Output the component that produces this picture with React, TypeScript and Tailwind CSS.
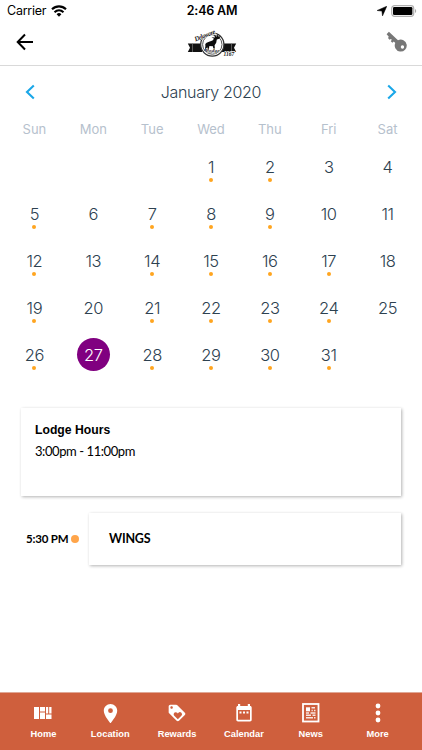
import { useState } from "react";
import { MdLocationOn, MdLoyalty } from "react-icons/md";

const weekDays = ["Sun", "Mon", "Tue", "Wed", "Thu", "Fri", "Sat"];
const eventDays = [1, 2, 5, 7, 8, 9, 12, 14, 15, 16, 17, 19, 21, 22, 23, 24, 26, 28, 29, 30, 31];

// January 2020 starts on a Wednesday
const days: Array<number | null> = [
  null, null, null,
  ...Array.from({ length: 31 }, (_, i) => i + 1),
  null,
];

function StatusBar() {
  return (
    <div className="flex h-[22px] items-center font-['Inter',sans-serif] text-black">
      <div className="flex flex-1 items-center gap-[5px] pl-[7px]">
        <span className="text-[12.5px] leading-none tracking-[-0.25px]">Carrier</span>
        <svg width="16" height="12" viewBox="0 0 16 12" fill="none" stroke="#000" strokeWidth="2.1">
          <path d="M1 4.3C5 .4 11 .4 15 4.3" />
          <path d="M3.500 7.200C6.200 4.700 9.800 4.700 12.500 7.200" />
          <path d="M5.600 9.200a3.400 3.400 0 0 1 4.800 0L8 11.700z" fill="#000" stroke="none" />
        </svg>
      </div>
      <span className="text-[12.5px] font-semibold leading-none tracking-[-0.2px]">2:46 AM</span>
      <div className="flex flex-1 items-center justify-end gap-[4px] pr-[5px]">
        <svg width="10" height="10" viewBox="0 0 10 10">
          <path d="M9.800 .2 5.500 9.900 4.900 5.100 .1 4.500z" fill="#000" stroke="#000" strokeWidth=".5" />
        </svg>
        <svg width="26" height="12" viewBox="0 0 26 12">
          <rect x=".7" y=".7" width="22" height="10.600" rx="2.800" fill="#fff" stroke="#b0b0b0" strokeWidth="1.200" />
          <rect x="2" y="2" width="19.400" height="8" rx="1.300" fill="#000" />
          <path d="M24 4v4c1.600-.5 1.600-3.500 0-4z" fill="#aaa" />
        </svg>
      </div>
    </div>
  );
}

function LodgeLogo() {
  return (
    <svg width="50" height="32" viewBox="0 0 50 32" className="mr-px overflow-visible">
      <path d="M.8 15.500H15v8.500H.8l2.200-4.200zM35 15.500h14.200L47 19.800l2.200 4.200H35z" fill="#111" />
      <path d="M5.500 15.500v8.500M44.500 15.500v8.500" stroke="#777" strokeWidth=".7" />
      <circle cx="25.300" cy="16.500" r="11.600" fill="#fff" stroke="#333" strokeWidth="1.200" />
      <circle cx="25.300" cy="16.500" r="9.700" fill="none" stroke="#555" strokeWidth="1" />
      <path
        d="M18.300 16c1.500-2.200 4.500-2.200 7.200-3.500l1.500-1.800-2.500-1.400 3.600.1-1.300-2.700 2.900 2 1.300-3.200.4 3.200 2.300-.8-1.500 2.800-2.400.8-.6 3.200-1.600 2.500.5 6.300h-1.200l-1-5.300-3.500-.1-1 5.200h-1.200l.1-4.800-1.500 4.300h-1.200l.8-4.600z"
        fill="#0c0c0c"
      />
      <path d="M17.500 22.200h15.600l-2 2.300H19.500z" fill="#222" />
      <g fontFamily="'Liberation Serif', serif" fontStyle="italic" fontWeight="bold" fill="#111">
        <text x="8.500" y="13.500" fontSize="6.800" textLength="22" transform="rotate(-22 8.500 13.500)" stroke="#fff" strokeWidth=".7" paintOrder="stroke">Delaware</text>
        <text x="36.500" y="27.500" fontSize="5.500" stroke="#fff" strokeWidth="1.400" paintOrder="stroke">1167</text>
        <text x="18.500" y="24" fontSize="5" textLength="14" stroke="#fff" strokeWidth=".8" paintOrder="stroke">Lodge</text>
      </g>
    </svg>
  );
}

function Header() {
  return (
    <header className="flex h-[44px] items-center border-b border-[#d9d9d9]">
      <button className="flex flex-1 pb-[3px] pl-[16px]" aria-label="Back">
        <svg width="18" height="18" viewBox="0 0 18 18" fill="none" stroke="#000" strokeWidth="2">
          <path d="M17 9H2M9 1.500 1.700 9 9 16.500" />
        </svg>
      </button>
      <LodgeLogo />
      <button className="flex flex-1 justify-end pr-[14px] pb-[4px]" aria-label="Sign in">
        <svg width="22" height="22" viewBox="0 0 22 22">
          <path
            fillRule="evenodd"
            d="M2.900 .8 12 9.200a6 6 0 1 1-2.700 2.800L7.800 10.500 6.400 11.800 4.800 10.200 5.800 8.800 4.900 7.900 3.500 8.700 2 7.100 2.800 5.700.6 3.200zM16.400 14.300a1.700 1.700 0 1 0 .1 3.400 1.700 1.700 0 0 0-.1-3.400z"
            fill="#777"
          />
        </svg>
      </button>
    </header>
  );
}

function Calendar() {
  const [selected, setSelected] = useState(27);

  return (
    <section className="px-[5px] font-['Inter',sans-serif] font-light">
      <div className="flex h-[51px] items-center justify-between px-[20px] text-[#2d4150]">
        <button aria-label="Previous month">
          <svg width="11" height="16" viewBox="0 0 11 16" fill="none" stroke="#1aa7e8" strokeWidth="2.100">
            <path d="M8.800 1.500 2 8l6.800 6.500" />
          </svg>
        </button>
        <span className="text-[16px] leading-none tracking-[-0.33px]">January 2020</span>
        <button aria-label="Next month">
          <svg width="11" height="16" viewBox="0 0 11 16" fill="none" stroke="#1aa7e8" strokeWidth="2.100">
            <path d="M2.200 1.500 9 8l-6.800 6.500" />
          </svg>
        </button>
      </div>
      <div className="grid h-[25px] grid-cols-7 items-center text-center text-[13px] font-normal leading-none text-[#b6c1cd]">
        {weekDays.map(day => (
          <span key={day}>{day}</span>
        ))}
      </div>
      <div className="grid grid-cols-7 pt-[8px]">
        {days.map((day, i) => (
          <div key={i} className="flex h-[47px] flex-col items-center">
            {day && (
              <button
                onClick={() => setSelected(day)}
                className={
                  day === selected
                    ? "flex h-[33px] w-[33px] items-center justify-center rounded-full bg-[#800080] pt-px text-[16.5px] leading-none tracking-[-0.4px] text-white"
                    : "flex h-[33px] w-[33px] items-center justify-center rounded-full pt-[2px] text-[16.5px] leading-none tracking-[-0.4px] text-[#2d4150]"
                }
              >
                {day}
              </button>
            )}
            {day && day !== selected && eventDays.includes(day) && (
              <span className="-mt-[5px] h-[4px] w-[4px] rounded-full bg-[#ffa51f]" />
            )}
          </div>
        ))}
      </div>
    </section>
  );
}

function Agenda() {
  return (
    <section className="flex flex-col gap-[17px] pt-[23px] pr-[21px] pl-[21px] text-black">
      <div className="h-[88px] bg-white px-[14px] pt-[14px] shadow-[1px_1px_3px_rgba(0,0,0,0.3)]">
        <h2 className="font-['Liberation_Sans',sans-serif] text-[12.2px] leading-[16px] font-bold">Lodge Hours</h2>
        <p className="mt-[5px] font-['Lato',sans-serif] text-[13px] leading-[16px] tracking-[-0.42px]">3:00pm - 11:00pm</p>
      </div>
      <div className="flex items-center font-['Lato',sans-serif]">
        <span className="w-[50px] pl-[5px] text-[11.5px] font-bold tracking-[-0.2px] whitespace-nowrap">5:30 PM</span>
        <span className="h-[8px] w-[8px] rounded-full bg-[#ffa54a]" />
        <div className="ml-[10px] flex h-[52px] flex-1 items-center bg-white pt-px pl-[20px] text-[12.5px] font-bold tracking-[-0.2px] shadow-[1px_1px_3px_rgba(0,0,0,0.3)]">
          WINGS
        </div>
      </div>
    </section>
  );
}

const tabs = [
  {
    label: "Home",
    icon: (
      <svg width="18" height="14" viewBox="0 0 18 14" fill="#fff">
        <path d="M0 1h5v12H0zM6 1h5v4.500H6zM6 6.500h5V13H6zM12 1h2.200v6.500H12zM15.200 1H17.500v6.500h-2.300zM12 8.500h5.500V13H12z" />
      </svg>
    ),
  },
  { label: "Location", icon: <MdLocationOn size={23} /> },
  { label: "Rewards", icon: <MdLoyalty size={20} /> },
  {
    label: "Calendar",
    icon: (
      <svg width="16" height="18" viewBox="0 0 16 18" fill="#fff">
        <path
          fillRule="evenodd"
          d="M2 0h2.200v2h7.600V0H14v2c1.100 0 1.700.7 1.700 1.700v12.100c0 1-.7 1.700-1.700 1.700H2c-1 0-1.700-.7-1.700-1.700V3.700C.3 2.700 1 2 2 2zM2 6v9.800h12V6z"
        />
        <path d="M3.500 7.500h2v2h-2zM7 7.500h2v2H7zM10.500 7.500h2v2h-2z" />
      </svg>
    ),
  },
  {
    label: "News",
    icon: (
      <svg width="18" height="20" viewBox="0 0 18 20" fill="none" stroke="#fff">
        <rect x="1" y="1" width="15.500" height="17.500" strokeWidth="1.800" />
        <path d="M4 4.300h4v4H4z" fill="#fff" stroke="none" />
        <path d="M9.500 4.800H13M9.500 7.500h1.300M12 7.500h1.500M4 10h3M8.500 10h5M4 12.300h5M10.500 12.300h3M4 14.700h7M12 14.700h1.500" strokeWidth="1.500" opacity=".85" />
      </svg>
    ),
  },
  {
    label: "More",
    icon: (
      <svg width="6" height="20" viewBox="0 0 6 20" fill="#fff">
        <circle cx="3" cy="3" r="2.400" />
        <circle cx="3" cy="10" r="2.400" />
        <circle cx="3" cy="17" r="2.400" />
      </svg>
    ),
  },
];

function TabBar() {
  return (
    <nav className="mt-auto grid h-[58px] grid-cols-6 border-t border-[#e0a796] bg-[#cf5f3d] pr-[11px] pl-[10px] font-['Liberation_Sans',sans-serif] text-white">
      {tabs.map(tab => (
        <button key={tab.label} className="flex flex-col items-center pt-[8px]">
          <span className="flex h-[24px] items-center">{tab.icon}</span>
          <span className="mt-[4px] text-[9.3px] leading-[10px] font-bold">{tab.label}</span>
        </button>
      ))}
    </nav>
  );
}

export default function App() {
  return (
    <div className="flex h-[750px] w-[422px] flex-col overflow-hidden bg-white">
      <StatusBar />
      <Header />
      <Calendar />
      <Agenda />
      <TabBar />
    </div>
  );
}
